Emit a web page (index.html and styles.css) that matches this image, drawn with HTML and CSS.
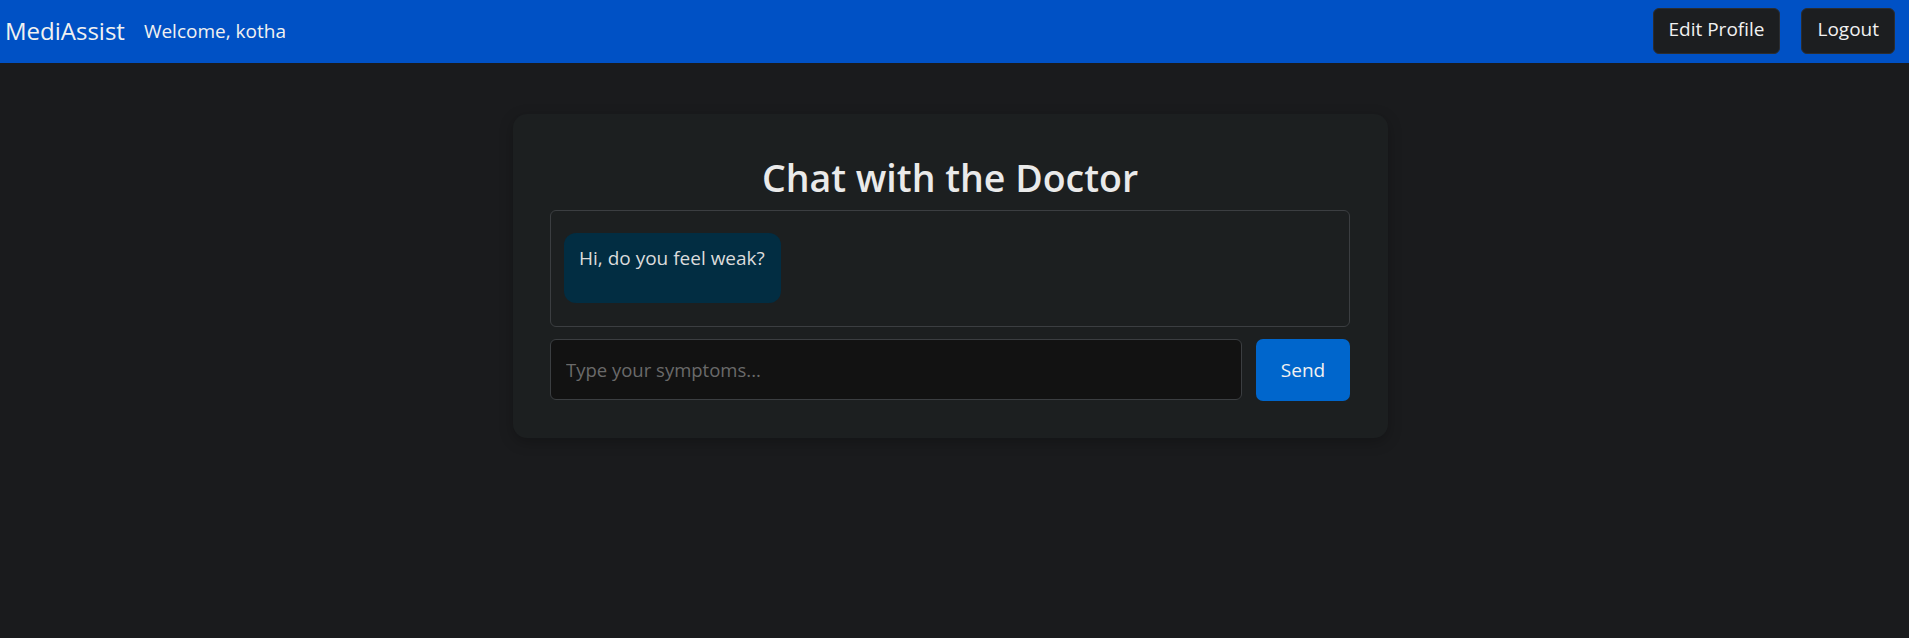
FILE: index.html
```html
<!DOCTYPE html>
<html lang="en">
<head>
<meta charset="utf-8">
<title>MediAssist</title>
<link rel="stylesheet" href="styles.css">
</head>
<body>
<nav class="navbar">
  <div class="nav-left">
    <span class="brand">MediAssist</span>
    <span class="welcome">Welcome, kotha</span>
  </div>
  <div class="nav-right">
    <button class="nav-btn">Edit Profile</button>
    <button class="nav-btn">Logout</button>
  </div>
</nav>
<main class="main">
  <section class="card">
    <h2 class="title">Chat with the Doctor</h2>
    <div class="chat-box">
      <div class="bubble"><p>Hi, do you feel weak?</p></div>
    </div>
    <div class="input-row">
      <input class="chat-input" type="text" placeholder="Type your symptoms...">
      <button class="send-btn">Send</button>
    </div>
  </section>
</main>
</body>
</html>
```
FILE: styles.css
```css
* { box-sizing: border-box; }
html, body { margin: 0; padding: 0; }
body {
  background: #1a1b1d;
  color: #dee2e6;
  font-family: "Open Sans", "Noto Sans", sans-serif;
  height: 638px;
}
.navbar {
  height: 63px;
  background: #0051c5;
  display: flex;
  align-items: center;
  justify-content: space-between;
  padding: 0 14px 0 5px;
}
.nav-left {
  display: flex;
  align-items: center;
  gap: 19px;
  padding-bottom: 2px;
}
.brand {
  font-size: 24px;
  color: #f1f1f1;
}
.welcome {
  font-size: 19px;
  color: #f1f1f1;
}
.nav-right {
  display: flex;
  gap: 21px;
  padding-bottom: 2px;
}
.nav-btn {
  height: 46px;
  padding: 0 15px 3px;
  background: #1c1e20;
  border: 1px solid #2b2d30;
  border-radius: 6px;
  color: #f1f1f1;
  font-family: inherit;
  font-size: 19px;
}
.main {
  display: flex;
  justify-content: center;
  padding: 51px 8px 0 0;
}
.card {
  width: 875px;
  background: #1c1f20;
  border-radius: 14px;
  padding: 37px 38px 37px 37px;
  box-shadow: 0 4px 14px rgba(0, 0, 0, 0.25);
}
.title {
  margin: 0 0 8px;
  padding-top: 3px;
  text-align: center;
  font-size: 37.5px;
  line-height: 48px;
  font-weight: 600;
  color: #eaeaea;
}
.chat-box {
  height: 117px;
  border: 1px solid #3b3e41;
  border-radius: 6px;
  padding: 22px 13px;
}
.bubble {
  display: inline-block;
  background: #022d42;
  border-radius: 12px;
  padding: 12px 15px;
  width: 217px;
  height: 70px;
}
.bubble p {
  margin: 0;
  font-size: 19px;
  line-height: 26px;
  color: #dcdcdc;
}
.input-row {
  display: flex;
  gap: 14px;
  margin-top: 12px;
}
.chat-input {
  flex: 1;
  height: 61px;
  background: #121212;
  border: 1px solid #3b3e41;
  border-radius: 6px;
  padding: 0 15px;
  font-family: inherit;
  font-size: 18.5px;
  color: #dee2e6;
  outline: none;
}
.chat-input::placeholder { color: #6a6a6a; }
.send-btn {
  width: 94px;
  height: 62px;
  background: #0066cc;
  border: none;
  border-radius: 7px;
  color: #f1f1f1;
  font-family: inherit;
  font-size: 19px;
}
```
